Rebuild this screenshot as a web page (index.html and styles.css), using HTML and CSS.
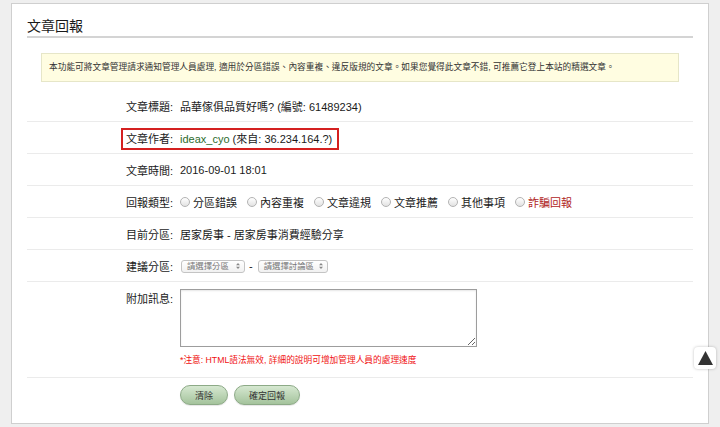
FILE: index.html
```html
<!DOCTYPE html>
<html lang="zh-TW">
<head>
  <meta charset="UTF-8">
  <meta name="viewport" content="width=device-width, initial-scale=1.0">
  <title>文章回報</title>
  <link rel="stylesheet" href="styles.css">
</head>
<body>
  <main class="report-panel">
    <h2 class="panel-title">文章回報</h2>

    <div class="notice">本功能可將文章管理請求通知管理人員處理, 適用於分區錯誤、內容重複、違反版規的文章。如果您覺得此文章不錯, 可推薦它登上本站的精選文章。</div>

    <div class="report-form">
      <div class="form-row">
        <div class="row-label">文章標題:</div>
        <div class="row-value">品華傢俱品質好嗎? (編號: 61489234)</div>
      </div>

      <div class="form-row highlight-row">
        <div class="row-label">文章作者:</div>
        <div class="row-value"><span class="author">ideax_cyo</span> (來自: 36.234.164.?)</div>
        <!-- 標註框 -->
        <div class="mark-box"></div>
      </div>

      <div class="form-row">
        <div class="row-label">文章時間:</div>
        <div class="row-value">2016-09-01 18:01</div>
      </div>

      <div class="form-row">
        <div class="row-label">回報類型:</div>
        <div class="row-value radio-group">
          <label class="radio-item"><span class="radio"></span>分區錯誤</label>
          <label class="radio-item"><span class="radio"></span>內容重複</label>
          <label class="radio-item"><span class="radio"></span>文章違規</label>
          <label class="radio-item"><span class="radio"></span>文章推薦</label>
          <label class="radio-item"><span class="radio"></span>其他事項</label>
          <label class="radio-item fraud"><span class="radio"></span>詐騙回報</label>
        </div>
      </div>

      <div class="form-row">
        <div class="row-label">目前分區:</div>
        <div class="row-value">居家房事 - 居家房事消費經驗分享</div>
      </div>

      <div class="form-row">
        <div class="row-label">建議分區:</div>
        <div class="row-value select-group">
          <span class="fake-select select-board"><span class="select-text">請選擇分區</span>
            <svg class="select-arrow" viewBox="0 0 6 9" width="4" height="6"><path d="M3 0 L6 3.5 H0 Z M3 9 L0 5.5 H6 Z" fill="#888"/></svg>
          </span>
          <span class="dash">-</span>
          <span class="fake-select select-forum"><span class="select-text">請選擇討論區</span>
            <svg class="select-arrow" viewBox="0 0 6 9" width="4" height="6"><path d="M3 0 L6 3.5 H0 Z M3 9 L0 5.5 H6 Z" fill="#888"/></svg>
          </span>
        </div>
      </div>

      <div class="form-row message-row">
        <div class="row-label">附加訊息:</div>
        <div class="row-value">
          <textarea class="message-box"></textarea>
          <p class="warn">*注意: HTML語法無效, 詳細的說明可增加管理人員的處理速度</p>
        </div>
      </div>

      <div class="form-row button-row">
        <div class="row-label"></div>
        <div class="row-value">
          <button class="green-btn">清除</button>
          <button class="green-btn">確定回報</button>
        </div>
      </div>
    </div>
  </main>

  <!-- 回到頂部 -->
  <div class="to-top">
    <svg viewBox="0 0 15 14" width="15" height="14"><path d="M7.5 0 L15 14 H0 Z" fill="#333"/></svg>
  </div>
</body>
</html>
```

FILE: styles.css
```css
* {
  box-sizing: border-box;
  margin: 0;
  padding: 0;
}

body {
  background: #efefef;
  color: #1a1a1a;
  font-family: 'Liberation Sans', 'Noto Sans CJK TC', sans-serif;
  font-size: 11px;
  min-height: 427px;
  overflow: hidden;
}

.report-panel {
  background: #fff;
  border: 1px solid #cfcfcf;
  margin: 3px 11px 0;
  padding: 0 15px;
}

.panel-title {
  font-size: 14px;
  font-weight: normal;
  line-height: 20px;
  padding-top: 12px;
  border-bottom: 2px solid #d4d4d4;
  color: #1a1a1a;
}

.notice {
  margin: 15px 14px 0;
  background: #fffde1;
  border: 1px solid #e6e6c8;
  font-size: 8.7px;
  line-height: 27px;
  padding-left: 7px;
  color: #333;
}

.report-form {
  margin-top: 8px;
}

.form-row {
  display: grid;
  grid-template-columns: 146px 1fr;
  column-gap: 7px;
  align-items: center;
  height: 32px;
  border-bottom: 1px solid #ebebeb;
  position: relative;
}

.row-label {
  text-align: right;
}

.author {
  color: #2d6b2d;
}

/* 紅色標註框 */
.mark-box {
  position: absolute;
  left: 94px;
  top: 6px;
  width: 218px;
  height: 22px;
  border: 2px solid #d42020;
}

.radio-group {
  display: flex;
  align-items: center;
}

.radio-item {
  display: inline-flex;
  align-items: center;
  margin-right: 10px;
}

.radio {
  display: inline-block;
  width: 10px;
  height: 10px;
  border-radius: 50%;
  border: 1px solid #b3b3b3;
  background: linear-gradient(#ffffff, #e2e2e2);
  margin-right: 3px;
}

.fraud {
  color: #b02424;
}

.select-group {
  display: flex;
  align-items: center;
}

.fake-select {
  display: inline-flex;
  align-items: center;
  justify-content: space-between;
  height: 13px;
  border: 1px solid #c4c4c4;
  border-radius: 3px;
  background: linear-gradient(#ffffff, #f1f1f1);
  color: #777;
  padding: 0 4px 0 5px;
  margin-top: 1px;
}

.select-text {
  font-size: 8.4px;
  line-height: 11px;
  white-space: nowrap;
}

.select-board {
  width: 64px;
  margin-left: 1px;
}

.select-forum {
  width: 70px;
}

.select-arrow {
  display: block;
  flex: none;
}

.dash {
  margin: 0 5px 0 4px;
  font-size: 11px;
}

.message-row {
  height: auto;
  align-items: start;
  padding: 7px 0 10px;
}

.message-row .row-label {
  line-height: 16px;
  padding-top: 2px;
}

.message-box {
  display: block;
  width: 297px;
  height: 58px;
  border: 1px solid #9d9d9d;
  box-shadow: inset 0 1px 2px rgba(0, 0, 0, 0.1);
  font-family: inherit;
}

.warn {
  color: #f01010;
  font-size: 8.7px;
  line-height: 14px;
  margin-top: 6px;
}

.button-row {
  height: 45px;
  border-bottom: none;
  align-items: start;
  padding-top: 7px;
}

.green-btn {
  height: 20px;
  border: 1px solid #8daa87;
  border-radius: 10px;
  background: linear-gradient(#d6e8d1, #a4c39c);
  color: #333;
  font-family: inherit;
  font-size: 9px;
  padding: 0 14px;
  margin-right: 3px;
  box-shadow: 0 1px 1px rgba(0, 0, 0, 0.1);
}

.green-btn:first-child {
  width: 48px;
}

.green-btn:last-child {
  width: 66px;
}

.to-top {
  position: fixed;
  right: 4px;
  top: 347px;
  width: 22px;
  height: 22px;
  background: #fff;
  border-radius: 4px;
  box-shadow: 0 0 3px rgba(0, 0, 0, 0.25);
  display: flex;
  align-items: center;
  justify-content: center;
}
```
